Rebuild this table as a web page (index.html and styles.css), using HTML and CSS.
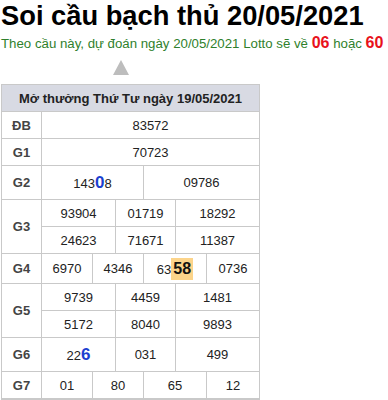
FILE: index.html
```html
<!DOCTYPE html>
<html lang="vi">
<head>
<meta charset="utf-8">
<title>Soi cầu bạch thủ 20/05/2021</title>
<link rel="stylesheet" href="styles.css">
</head>
<body>
<div class="page">
  <h1 class="title">Soi cầu bạch thủ 20/05/2021</h1>
  <p class="predict">Theo cầu này, dự đoán ngày 20/05/2021 Lotto sẽ về <b class="hot">06</b> hoặc <b class="hot">60</b></p>
  <div class="pointer"></div>
  <div class="results">
    <div class="head">Mở thưởng Thứ Tư ngày 19/05/2021</div>

    <div class="lbl">ĐB</div>
    <div class="cell c-all">83572</div>

    <div class="lbl">G1</div>
    <div class="cell c-all">70723</div>

    <div class="lbl">G2</div>
    <div class="cell c-half1"><span>143<b class="pick">0</b>8</span></div>
    <div class="cell c-half2">09786</div>

    <div class="lbl span2">G3</div>
    <div class="cell c-t1">93904</div>
    <div class="cell c-t2">01719</div>
    <div class="cell c-t3">18292</div>
    <div class="cell c-t1">24623</div>
    <div class="cell c-t2">71671</div>
    <div class="cell c-t3">11387</div>

    <div class="lbl">G4</div>
    <div class="cell c-q1">6970</div>
    <div class="cell c-q2">4346</div>
    <div class="cell c-q3"><span>63<b class="mark">58</b></span></div>
    <div class="cell c-q4">0736</div>

    <div class="lbl span2">G5</div>
    <div class="cell c-t1">9739</div>
    <div class="cell c-t2">4459</div>
    <div class="cell c-t3">1481</div>
    <div class="cell c-t1">5172</div>
    <div class="cell c-t2">8040</div>
    <div class="cell c-t3">9893</div>

    <div class="lbl">G6</div>
    <div class="cell c-t1"><span>22<b class="pick">6</b></span></div>
    <div class="cell c-t2">031</div>
    <div class="cell c-t3">499</div>

    <div class="lbl">G7</div>
    <div class="cell c-q1">01</div>
    <div class="cell c-q2">80</div>
    <div class="cell c-q3">65</div>
    <div class="cell c-q4">12</div>
  </div>
</div>
</body>
</html>
```

FILE: styles.css
```css
html, body {
  margin: 0;
  padding: 0;
  background: #fff;
}

body {
  font-family: Arial, "Liberation Sans", Helvetica, sans-serif;
  color: #222;
}

.page {
  padding: 0 1px;
}

.title {
  margin: 0;
  font-size: 27.3px;
  font-weight: bold;
  line-height: 31px;
  color: #000;
}

.predict {
  margin: 3px 0 0;
  font-size: 13.25px;
  line-height: 18px;
  color: #2f7f2c;
  white-space: nowrap;
}

.hot {
  color: #e8111b;
  font-size: 16px;
}

.pointer {
  width: 0;
  height: 0;
  margin: 7px 0 0 112px;
  border-left: 8px solid transparent;
  border-right: 8px solid transparent;
  border-bottom: 15px solid #bdbdbd;
}

.results {
  margin-top: 9px;
  width: 259px;
  box-sizing: border-box;
  display: grid;
  grid-template-columns: 40px 51px 23px 28px 32px 31px 53px;
  grid-template-rows: 27px 27px 27px 34px 27px 27px 30px 27px 27px 34px 27px;
  border-left: 1px solid #c9c9c9;
  border-top: 1px solid #c9c9c9;
  border-bottom: 1px solid #c9c9c9;
  font-size: 13px;
}

.head,
.lbl,
.cell {
  box-sizing: border-box;
  border-right: 1px solid #c9c9c9;
  border-bottom: 1px solid #c9c9c9;
  display: flex;
  align-items: center;
  justify-content: center;
  white-space: nowrap;
}

.head {
  grid-column: 1 / -1;
  background: #d8dae3;
  font-weight: bold;
  color: #222;
}

.lbl {
  grid-column: 1;
  font-weight: bold;
  color: #444;
}

.span2 {
  grid-row: span 2;
}

.cell {
  color: #222;
}

.c-all { grid-column: 2 / 8; }

.c-half1 { grid-column: 2 / 5; }
.c-half2 { grid-column: 5 / 8; }

.c-t1 { grid-column: 2 / 4; }
.c-t2 { grid-column: 4 / 6; }
.c-t3 { grid-column: 6 / 8; }

.c-q1 { grid-column: 2 / 3; }
.c-q2 { grid-column: 3 / 5; }
.c-q3 { grid-column: 5 / 7; }
.c-q4 { grid-column: 7 / 8; }

.pick {
  color: #1b3fd0;
  font-size: 17px;
}

.mark {
  display: inline-block;
  padding: 2px 2px;
  background: #fcd48a;
  font-size: 16px;
  color: #111;
}
```
